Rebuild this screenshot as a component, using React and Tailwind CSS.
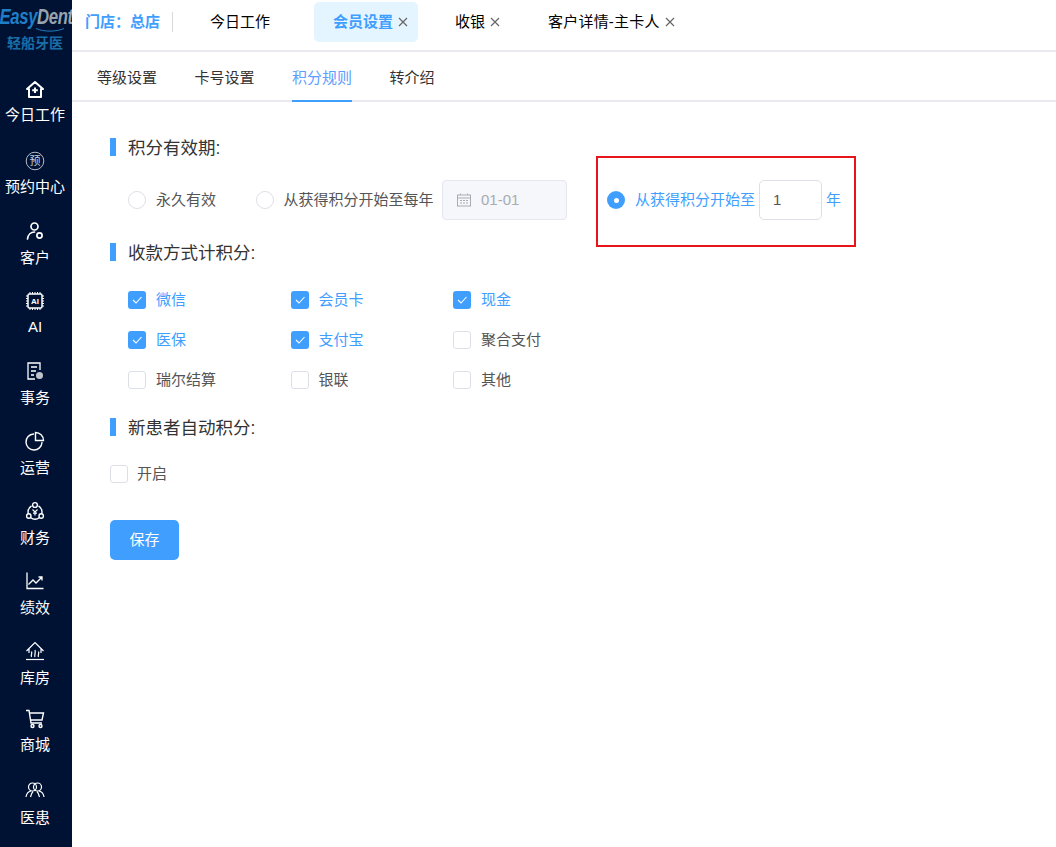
import React from 'react'

const CN = "font-['Liberation_Sans','Noto_Sans_CJK_SC',sans-serif]"

const svgProps = {
  width: 20,
  height: 20,
  viewBox: '0 0 20 20',
  fill: 'none',
  stroke: 'currentColor',
  strokeWidth: 1.5,
}

const HomeIcon = () => (
  <svg {...svgProps} strokeWidth={2}>
    <path d="M10 2 L18 9 H16 V17 H4 V9 H2 Z" strokeLinejoin="round" />
    <path d="M10 7.5 V13 M7.2 10.2 H12.8" />
  </svg>
)
const BookIcon = () => (
  <svg {...svgProps} strokeWidth={1}>
    <circle cx="10" cy="10" r="8.8" stroke="#b4bcc8" />
    <text x="10" y="14" textAnchor="middle" fontSize="11" fill="#c8ced8" stroke="none" fontFamily="Noto Sans CJK SC">预</text>
  </svg>
)
const UserIcon = () => (
  <svg {...svgProps} strokeWidth={1.7}>
    <circle cx="9.5" cy="5.5" r="3.5" />
    <path d="M2.5 18 C3 13.5 6 11 9.5 11" strokeLinecap="round" />
    <circle cx="14.5" cy="14.5" r="2.6" />
  </svg>
)
const ChipIcon = () => (
  <svg {...svgProps} strokeWidth={1.2}>
    <rect x="3" y="3" width="14" height="14" rx="1.5" strokeWidth={1.5} />
    <path d="M5 1v2M7.5 1v2M10 1v2M12.5 1v2M15 1v2M5 17v2M7.5 17v2M10 17v2M12.5 17v2M15 17v2M1 5h2M1 7.5h2M1 10h2M1 12.5h2M1 15h2M17 5h2M17 7.5h2M17 10h2M17 12.5h2M17 15h2" strokeWidth={1} />
    <text x="10" y="13" textAnchor="middle" fontSize="8" fontWeight="700" fill="currentColor" stroke="none" fontFamily="Liberation Sans">AI</text>
  </svg>
)
const TaskIcon = () => (
  <svg {...svgProps} strokeWidth={1.3}>
    <path d="M15 9 V2 H3 V18 H10" />
    <path d="M6 6h6M6 10h5M6 14h3" />
    <circle cx="14.5" cy="14.5" r="3.5" fill="currentColor" stroke="none" opacity="0.75" />
  </svg>
)
const PieIcon = () => (
  <svg {...svgProps} strokeWidth={1.4}>
    <path d="M8.5 3 A8 8 0 1 0 17 11.5" strokeLinecap="round" />
    <path d="M10.5 1.5 A8 8 0 0 1 18.5 9.5 H10.5 Z" />
  </svg>
)
const FinanceIcon = () => (
  <svg {...svgProps} strokeWidth={1.4}>
    <path d="M6.5 4.8 A7.5 7.5 0 0 0 3.2 12.5 M13.5 4.8 A7.5 7.5 0 0 1 16.8 12.5 M5.5 16.5 A7.5 7.5 0 0 0 14.5 16.5" />
    <circle cx="10" cy="4" r="2.4" />
    <circle cx="3.8" cy="15" r="2.2" />
    <circle cx="16.2" cy="15" r="2.2" />
    <path d="M7.5 8.5 L10 11 L12.5 8.5 M10 11 V14.5 M8 12.2 H12" strokeWidth={1.2} />
  </svg>
)
const ChartIcon = () => (
  <svg {...svgProps} strokeWidth={1.3}>
    <path d="M2 1.5 V17.5 H18.5" />
    <path d="M3.5 13.5 L8 9 L11 12 L17 6 M13.5 6 H17 V9.5" />
  </svg>
)
const StoreIcon = () => (
  <svg {...svgProps} strokeWidth={1.2}>
    <path d="M1.5 10 L10 1.5 L18.5 10 M4 8 V12 M16 8 V12" />
    <path d="M1 18.5 H19" />
    <path d="M6.5 16 C5.5 14 7.5 13 6.5 10.5 M10 16 C9 14 11 12 10 9 M13.5 16 C12.5 14 14.5 13 13.5 10.5" />
  </svg>
)
const CartIcon = () => (
  <svg {...svgProps} strokeWidth={1.4}>
    <path d="M1 1.5 H4 L6 14 H17 M4.5 4 H18.5 L17 11 H5.5" />
    <circle cx="7.5" cy="17" r="1.5" />
    <circle cx="15.5" cy="17" r="1.5" />
  </svg>
)
const PeopleIcon = () => (
  <svg {...svgProps} strokeWidth={1.2}>
    <circle cx="7.5" cy="7" r="4" />
    <circle cx="12.5" cy="7" r="4" />
    <path d="M1 17 C1.5 13.5 3.5 11.5 6 11 M19 17 C18.5 13.5 16.5 11.5 14 11 M5.5 17 C6 15 6.5 13 8 11.5 M14.5 17 C14 15 13.5 13 12 11.5" />
  </svg>
)

const navItems = [
  { label: '今日工作', Icon: HomeIcon, box: 'h-[71px]', gap: 'mt-[5px]' },
  { label: '预约中心', Icon: BookIcon, box: 'h-[70px]', gap: 'mt-[6px]' },
  { label: '客户', Icon: UserIcon, box: 'h-[70px]', gap: 'mt-[7px]' },
  { label: 'AI', Icon: ChipIcon, box: 'h-[70px]', gap: 'mt-[6px]' },
  { label: '事务', Icon: TaskIcon, box: 'h-[70px]', gap: 'mt-[7px]' },
  { label: '运营', Icon: PieIcon, box: 'h-[70px]', gap: 'mt-[7px]' },
  { label: '财务', Icon: FinanceIcon, box: 'h-[70px]', gap: 'mt-[7px]' },
  { label: '绩效', Icon: ChartIcon, box: 'h-[70px]', gap: 'mt-[7px]' },
  { label: '库房', Icon: StoreIcon, box: 'h-[68px]', gap: 'mt-[7px]' },
  { label: '商城', Icon: CartIcon, box: 'h-[71px]', gap: 'mt-[6px]' },
  { label: '医患', Icon: PeopleIcon, box: 'h-[67px]', gap: 'mt-[8px]' },
]

const Sidebar = () => (
  <aside className="w-[72px] h-[847px] shrink-0 overflow-hidden bg-[#001233] text-white">
    <div className="h-[80px] pt-[5px] flex flex-col items-center">
      <div className="w-[72px] flex justify-center">
        <div className="h-[24px] shrink-0 whitespace-nowrap italic font-bold text-[22px] leading-[24px] tracking-[-0.5px] scale-x-[0.76]">
          <span className="text-[#1e7fc8]">Easy</span>
          <span className="text-[#98a3ad]">Dent</span>
        </div>
      </div>
      <svg width="28" height="4" viewBox="0 0 28 4" fill="none" stroke="#1e7fc8" strokeWidth="1" className="self-end mr-[8px] -mt-[1px]">
        <path d="M0 0.5 C8 4 20 4 28 0.5" />
      </svg>
      <div className="mt-[3px] pr-[2px] text-[14px] leading-[16px] font-bold text-[#1a6ea8]">轻船牙医</div>
    </div>
    {navItems.map(({ label, Icon, box, gap }) => (
      <div key={label} className={`${box} pr-[2px] flex flex-col items-center`}>
        <div className="h-5 flex items-center justify-center"><Icon /></div>
        <div className={`${gap} text-[15px] leading-5 whitespace-nowrap`}>{label}</div>
      </div>
    ))}
  </aside>
)

const CloseX = () => (
  <svg width="10" height="10" viewBox="0 0 10 10" stroke="#666" strokeWidth="1.2" className="ml-[5px]">
    <path d="M1 1 L9 9 M9 1 L1 9" />
  </svg>
)

const TopBar = () => (
  <div className="h-[52px] flex border-b-2 border-[#e8eaf0] text-[15px]">
    <div className="h-[40px] mt-[2px] flex items-center w-full">
      <span className="ml-[13px] font-bold text-[#409eff]">{'门店\uFF1A总店'}</span>
      <span className="ml-[12px] w-px h-[20px] bg-[#d9d9d9]"></span>
      <span className="ml-[37px] text-black">今日工作</span>
      <div className="ml-[44px] w-[104px] h-[40px] rounded-[5px] bg-[#e5f5ff] flex items-center pl-[19px]">
        <span className="font-bold text-[#409eff]">会员设置</span>
        <CloseX />
      </div>
      <div className="ml-[37px] flex items-center text-black">收银<CloseX /></div>
      <div className="ml-[48px] flex items-center text-black tracking-[0.2px]">客户详情-主卡人<CloseX /></div>
    </div>
  </div>
)

const subTabs = ['等级设置', '卡号设置', '积分规则', '转介绍']

const SubTabs = () => (
  <div className="h-[50px] flex pl-[25px] gap-[37.5px] border-b-2 border-[#e8eaf0] text-[15px] text-[#333]">
    {subTabs.map(t => (
      <div
        key={t}
        className={`h-[50px] pt-[15px] leading-[22px] border-b-2 ${t === '积分规则' ? 'text-[#5c9dff] border-[#409eff]' : 'border-transparent'}`}
      >
        {t}
      </div>
    ))}
  </div>
)

const SectionTitle = ({ children, className }) => (
  <div className={`flex items-center h-[24px] ${className || ''}`}>
    <span className="w-[6px] h-[18px] mb-[2px] bg-[#409eff]"></span>
    <span className="ml-[12px] text-[17.5px] text-[#333]">{children}</span>
  </div>
)

const Radio = ({ checked }) => (
  checked
    ? <span className="w-[18px] h-[18px] rounded-full bg-[#409eff] flex items-center justify-center shrink-0"><span className="w-[5px] h-[5px] rounded-full bg-white"></span></span>
    : <span className="w-[18px] h-[18px] rounded-full border border-[#dcdfe6] bg-white shrink-0"></span>
)

const Check = ({ checked, label, className, labelGap = 'ml-[10px]' }) => (
  <div className={`flex items-center ${className || ''}`}>
    {checked ? (
      <span className="w-[18px] h-[18px] rounded-[3px] bg-[#409eff] flex items-center justify-center shrink-0">
        <svg width="12" height="12" viewBox="0 0 12 12" fill="none" stroke="#fff" strokeWidth="1.1"><path d="M2 6 L5 9 L10.5 3" /></svg>
      </span>
    ) : (
      <span className="w-[18px] h-[18px] rounded-[3px] border border-[#dcdfe6] bg-white shrink-0"></span>
    )}
    <span className={`${labelGap} text-[15px] ${checked ? 'text-[#409eff]' : 'text-[#555]'}`}>{label}</span>
  </div>
)

const payments = [
  { label: '微信', checked: true },
  { label: '会员卡', checked: true },
  { label: '现金', checked: true },
  { label: '医保', checked: true },
  { label: '支付宝', checked: true },
  { label: '聚合支付', checked: false },
  { label: '瑞尔结算', checked: false },
  { label: '银联', checked: false },
  { label: '其他', checked: false },
]

const Form = () => (
  <div className="pl-[38px] pt-[34px]">
    <SectionTitle>积分有效期:</SectionTitle>
    <div className="mt-[20px] h-[40px] flex items-center text-[15px] text-[#555]">
      <div className="ml-[18px] flex items-center w-[128px]">
        <Radio />
        <span className="ml-[10px] pt-[1px]">永久有效</span>
      </div>
      <Radio />
      <span className="ml-[9.5px]">从获得积分开始至每年</span>
      <div className="ml-[8.5px] w-[125px] h-[40px] rounded-[4px] border border-[#e4e7ed] bg-[#f5f7fa] flex items-center pl-[14px] text-[#a8abb2]">
        <svg width="14" height="14" viewBox="0 0 14 14" fill="none" stroke="#a8abb2" strokeWidth="1">
          <rect x="0.5" y="2" width="13" height="11" />
          <path d="M0.5 5 H13.5 M3.5 0.5 V2 M10.5 0.5 V2 M3 7.5h2M6 7.5h2M9 7.5h2M3 10h2M6 10h2M9 10h2" />
        </svg>
        <span className="ml-[10px]">01-01</span>
      </div>
      <div className="ml-[40px]"><Radio checked /></div>
      <span className="ml-[10px] text-[#409eff]">从获得积分开始至</span>
      <div className="ml-[4px] w-[63px] h-[40px] rounded-[5px] border border-[#dcdfe6] flex items-center pl-[13px] text-[#555]">1</div>
      <span className="ml-[4px] text-[#409eff]">年</span>
    </div>
    <SectionTitle className="mt-[21px]">收款方式计积分:</SectionTitle>
    <div className="mt-[15px] ml-[18px] grid grid-cols-[162.5px_162.5px_120px] auto-rows-[40px] items-center">
      {payments.map(p => <Check key={p.label} {...p} />)}
    </div>
    <SectionTitle className="mt-[16px]">新患者自动积分:</SectionTitle>
    <Check label="开启" labelGap="ml-[9px]" className="mt-[22px] h-[24px]" />
    <button className="mt-[34px] w-[69px] h-[40px] rounded-[5px] bg-[#409eff] text-white text-[15px]">保存</button>
  </div>
)

const App = () => (
  <div className={`${CN} relative w-[1056px] h-[847px] flex overflow-hidden bg-white`}>
    <Sidebar />
    <main className="flex-1">
      <TopBar />
      <SubTabs />
      <Form />
    </main>
    {/* annotation box from the original screenshot */}
    <div className="absolute left-[596px] top-[156px] w-[260px] h-[91px] border-2 border-[#e8141c]"></div>
  </div>
)

export default App
